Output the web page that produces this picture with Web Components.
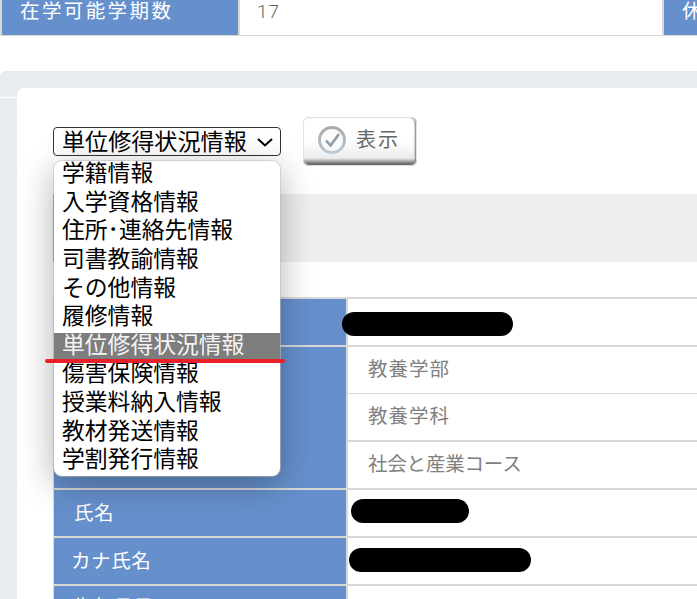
<!DOCTYPE html>
<html lang="ja">
<head>
<meta charset="utf-8">
<title>学籍情報</title>
<style>
  html, body {
    margin: 0;
    width: 697px;
    height: 599px;
    overflow: hidden;
    background: #fff;
    font-family: "Noto Sans CJK JP", "Liberation Sans", sans-serif;
  }
</style>
</head>
<body>
  <info-strip></info-strip>
  <content-panel>
    <form-row>
      <select-menu value="単位修得状況情報" selected="6">
        <option>学籍情報</option>
        <option>入学資格情報</option>
        <option>住所･連絡先情報</option>
        <option>司書教諭情報</option>
        <option>その他情報</option>
        <option>履修情報</option>
        <option>単位修得状況情報</option>
        <option>傷害保険情報</option>
        <option>授業料納入情報</option>
        <option>教材発送情報</option>
        <option>学割発行情報</option>
      </select-menu>
      <show-button>表示</show-button>
    </form-row>
    <section-band></section-band>
    <data-table>
      <data-row><redact-bar left="-6" top="13" width="171"></redact-bar></data-row>
      <data-row>
        <data-value>教養学部</data-value>
        <data-value>教養学科</data-value>
        <data-value style="letter-spacing: -.2px">社会と産業コース</data-value>
      </data-row>
      <data-row label="氏名"><redact-bar left="3" top="9" width="118"></redact-bar></data-row>
      <data-row label="カナ氏名" pad="17"><redact-bar left="1" top="10" width="182"></redact-bar></data-row>
      <data-row label="生年月日" pad="19" style="--lift: 8px"></data-row>
    </data-table>
  </content-panel>

<script>
class InfoStrip extends HTMLElement {
  constructor() {
    super()
    this.attachShadow({ mode: "open" }).innerHTML = `
      <style>
        :host {
          display: grid;
          grid-template-columns: 236px 1fr 33px;
          height: 36px;
          box-sizing: border-box;
          border-left: 2px solid #d8d8d8;
          border-bottom: 1px solid #d8d8d8;
          font-size: 19.5px;
          line-height: 19px;
          overflow: hidden;
        }
        .label {
          background: #6690cc;
          color: #fff;
          padding-left: 18px;
          letter-spacing: 2.4px;
          white-space: nowrap;
        }
        .value {
          border-left: 2px solid #d8d8d8;
          border-right: 2px solid #d8d8d8;
          padding-left: 17px;
          padding-top: 2px;
          color: #666;
          font-family: Roboto, "Liberation Sans", sans-serif;
          font-weight: 300;
          font-size: 19px;
          letter-spacing: 1px;
        }
      </style>
      <div class="label">在学可能学期数</div>
      <div class="value">17</div>
      <div class="label">休学</div>`
  }
}

class ContentPanel extends HTMLElement {
  constructor() {
    super()
    this.attachShadow({ mode: "open" }).innerHTML = `
      <style>
        :host {
          display: block;
          margin-top: 35px;
          padding: 17px 0 0 17px;
          border-top-left-radius: 6px;
          background: linear-gradient(#fff, #fff) 0 26px / 17px 1px no-repeat #e6ecf0;
          height: 600px;
        }
        .inner {
          background: #fff;
          border-top-left-radius: 7px;
          padding: 29px 0 0 36px;
          height: 100%;
        }
      </style>
      <div class="inner"><slot></slot></div>`
  }
}

class FormRow extends HTMLElement {
  constructor() {
    super()
    this.attachShadow({ mode: "open" }).innerHTML = `
      <style>
        :host {
          display: flex;
          align-items: center;
          gap: 22px;
          height: 49px;
          margin-bottom: 28px;
          position: relative;
          z-index: 2;
        }
      </style>
      <slot></slot>`
  }
}

class SelectMenu extends HTMLElement {
  constructor() {
    super()
    this.attachShadow({ mode: "open" }).innerHTML = `
      <style>
        :host {
          display: block;
          position: relative;
          width: 228px;
          font-size: 22.8px;
          color: #000;
        }
        .box {
          display: flex;
          align-items: center;
          justify-content: space-between;
          box-sizing: border-box;
          height: 29px;
          padding: 0 7px 2px 8px;
          border: 1px solid #333;
          border-radius: 4px;
          background: #fff;
          font-size: 23.1px;
          line-height: 25px;
          white-space: nowrap;
        }
        svg { display: block; width: 16px; height: 9px; margin-top: 3px; }
        .list {
          position: absolute;
          top: 34px;
          left: 1px;
          width: 226px;
          height: 315px;
          background: #fff;
          border-radius: 8px;
          box-shadow: 0 0 0 1px rgba(190, 190, 190, .55), 0 8px 34px rgba(0, 0, 0, .32);
        }
        .item {
          height: 28.64px;
          line-height: 22px;
          padding-left: 8px;
          white-space: nowrap;
        }
        .item.on { background: #7d7d7d; color: #f4f4f4; }
        .mark {
          position: absolute;
          left: -8px;
          top: 232px;
          width: 240px;
          height: 4px;
          border-radius: 2px;
          background: #e8202a;
        }
      </style>
      <div class="box">
        <span id="current"></span>
        <svg viewBox="0 0 16 9"><path d="M1 1l7 6.5L15 1" fill="none" stroke="#000" stroke-width="2"/></svg>
      </div>
      <div class="list" id="list"></div>
      <div class="mark"></div>`
  }

  connectedCallback() {
    const selected = Number(this.getAttribute("selected"))
    const list = this.shadowRoot.getElementById("list")
    this.shadowRoot.getElementById("current").textContent = this.getAttribute("value")
    this.querySelectorAll("option").forEach((option, i) => {
      const item = document.createElement("div")
      item.className = i === selected ? "item on" : "item"
      item.textContent = option.textContent
      list.append(item)
    })
  }
}

class ShowButton extends HTMLElement {
  constructor() {
    super()
    this.attachShadow({ mode: "open" }).innerHTML = `
      <style>
        :host {
          display: flex;
          align-items: center;
          box-sizing: border-box;
          width: 114px;
          height: 49px;
          padding: 0 0 3px 14px;
          gap: 9px;
          border-radius: 6px;
          background: linear-gradient(#fff 50%, #ebebeb 84%, #666 96%);
          box-shadow: inset 0 0 0 1px #e2e2e2, inset -2px 0 2px #777;
          font-size: 20px;
          letter-spacing: 2px;
          color: #666;
        }
        span { margin-bottom: 3px; }
        svg { display: block; width: 30px; height: 30px; flex: none; }
      </style>
      <svg viewBox="0 0 30 30">
        <defs>
          <linearGradient id="ring" x1="0" y1="0" x2="0" y2="1">
            <stop offset="0" stop-color="#a8a8a8"/>
            <stop offset="1" stop-color="#b9cbd8"/>
          </linearGradient>
        </defs>
        <circle cx="15" cy="15" r="12.5" fill="#fbfbfb" stroke="url(#ring)" stroke-width="3"/>
        <path d="M9 15.5l4.5 5L22 9" fill="none" stroke="#8d9ba6" stroke-width="2.6"/>
      </svg>
      <span><slot></slot></span>`
  }
}

class SectionBand extends HTMLElement {
  constructor() {
    super()
    this.attachShadow({ mode: "open" }).innerHTML = `
      <style>
        :host {
          display: block;
          height: 68px;
          margin-bottom: 35px;
          background: #efefef;
          border-left: 1px solid #5f7ea8;
        }
      </style>`
  }
}

class DataTable extends HTMLElement {
  constructor() {
    super()
    this.attachShadow({ mode: "open" }).innerHTML = `
      <style>
        :host {
          display: block;
          width: 643px;
          border-top: 2px solid #d8d8d8;
          border-left: 1px solid #d8d8d8;
        }
      </style>
      <slot></slot>`
  }
}

class DataRow extends HTMLElement {
  constructor() {
    super()
    this.attachShadow({ mode: "open" }).innerHTML = `
      <style>
        :host {
          display: grid;
          grid-template-columns: 292px 1fr;
          min-height: 46px;
          border-bottom: 2px solid #d8d8d8;
          font-size: 19.5px;
        }
        .label {
          display: flex;
          align-items: center;
          box-sizing: border-box;
          padding-bottom: var(--lift, 4px);
          background: #6690cc;
          color: #fff;
          letter-spacing: .6px;
        }
        .value {
          position: relative;
          border-left: 2px solid #d8d8d8;
          min-height: 46px;
        }
      </style>
      <div class="label" id="label"></div>
      <div class="value"><slot></slot></div>`
  }

  connectedCallback() {
    const label = this.shadowRoot.getElementById("label")
    label.textContent = this.getAttribute("label") || ""
    label.style.paddingLeft = (this.getAttribute("pad") || 20) + "px"
  }
}

class DataValue extends HTMLElement {
  constructor() {
    super()
    this.attachShadow({ mode: "open" }).innerHTML = `
      <style>
        :host {
          display: flex;
          align-items: center;
          box-sizing: content-box;
          height: 41px;
          padding: 0 0 5px 20px;
          color: #808080;
          font-size: 19.5px;
          letter-spacing: 1px;
          border-bottom: 2px solid #d8d8d8;
        }
        :host(:first-child) { border-bottom-width: 1px; }
        :host(:last-child) { border-bottom: 0; }
      </style>
      <slot></slot>`
  }
}

// black marks over personal data
class RedactBar extends HTMLElement {
  constructor() {
    super()
    this.attachShadow({ mode: "open" }).innerHTML = `
      <style>
        :host {
          position: absolute;
          height: 24px;
          border-radius: 12px;
          background: #000;
        }
      </style>`
  }

  connectedCallback() {
    this.style.left = this.getAttribute("left") + "px"
    this.style.top = this.getAttribute("top") + "px"
    this.style.width = this.getAttribute("width") + "px"
  }
}

customElements.define("info-strip", InfoStrip)
customElements.define("content-panel", ContentPanel)
customElements.define("form-row", FormRow)
customElements.define("select-menu", SelectMenu)
customElements.define("show-button", ShowButton)
customElements.define("section-band", SectionBand)
customElements.define("data-table", DataTable)
customElements.define("data-row", DataRow)
customElements.define("data-value", DataValue)
customElements.define("redact-bar", RedactBar)
</script>
</body>
</html>
